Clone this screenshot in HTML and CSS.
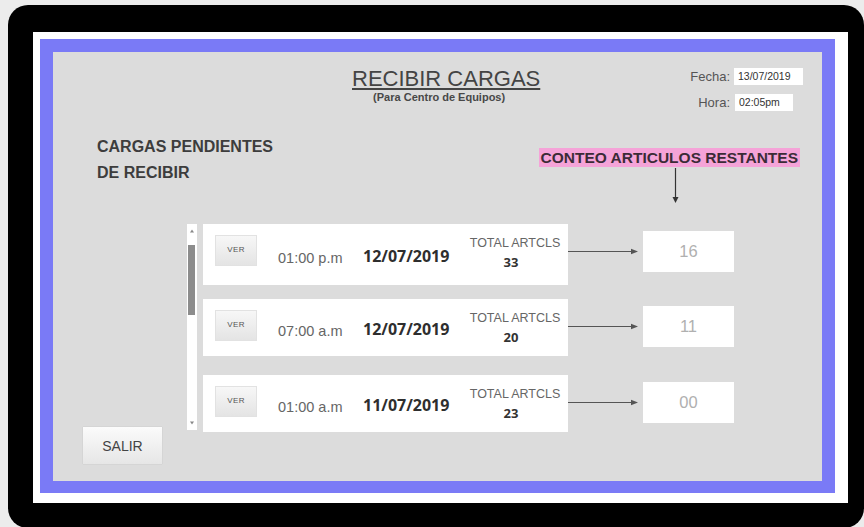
FILE: index.html
```html
<!DOCTYPE html>
<html lang="es">
<head>
<meta charset="utf-8">
<title>Recibir cargas</title>
<link rel="stylesheet" href="styles.css">
</head>
<body>
<div class="device">
  <div class="screen">
    <main class="panel">
      <header class="header">
        <div class="title-block">
          <h1 class="title">RECIBIR CARGAS</h1>
          <p class="subtitle">(Para Centro de Equipos)</p>
        </div>
        <div class="stamp">
          <span class="stamp-label">Fecha:</span><span class="stamp-value stamp-date">13/07/2019</span>
          <span class="stamp-label">Hora:</span><span class="stamp-value stamp-time">02:05pm</span>
        </div>
      </header>

      <section class="mid">
        <h2 class="pending">CARGAS PENDIENTES<br>DE RECIBIR</h2>
        <div class="conteo">
          <span class="conteo-label">CONTEO ARTICULOS RESTANTES</span>
          <svg class="down-arrow" width="9" height="36" viewBox="0 0 9 36">
            <line x1="4.5" y1="0" x2="4.5" y2="31" stroke="#333" stroke-width="1.2"/>
            <path d="M1.5 29 L4.5 35 L7.5 29 Z" fill="#333"/>
          </svg>
        </div>
      </section>

      <section class="list-area">
        <div class="side">
          <button class="salir">SALIR</button>
        </div>

        <div class="scrollbar">
          <svg class="scroll-btn" width="10" height="5" viewBox="0 0 10 5"><path d="M3 4.5 L5 1.5 L7 4.5 Z" fill="#888"/></svg>
          <div class="scroll-thumb"></div>
          <svg class="scroll-btn scroll-btn-down" width="10" height="5" viewBox="0 0 10 5"><path d="M3 0.5 L5 3.5 L7 0.5 Z" fill="#888"/></svg>
        </div>

        <div class="rows">
          <div class="row">
            <div class="card card-first">
              <button class="ver">VER</button>
              <span class="time">01:00 p.m</span>
              <span class="date">12/07/2019</span>
              <div class="totals">
                <div class="totals-label">TOTAL ARTCLS</div>
                <div class="totals-num">33</div>
              </div>
            </div>
            <div class="link">
              <svg class="right-arrow" width="70" height="9" viewBox="0 0 70 9">
                <line x1="0" y1="4.5" x2="64" y2="4.5" stroke="#555" stroke-width="1.2"/>
                <path d="M63 1.8 L70 4.5 L63 7.2 Z" fill="#555"/>
              </svg>
              <div class="count">16</div>
            </div>
          </div>

          <div class="row">
            <div class="card">
              <button class="ver">VER</button>
              <span class="time">07:00 a.m</span>
              <span class="date">12/07/2019</span>
              <div class="totals">
                <div class="totals-label">TOTAL ARTCLS</div>
                <div class="totals-num">20</div>
              </div>
            </div>
            <div class="link">
              <svg class="right-arrow" width="70" height="9" viewBox="0 0 70 9">
                <line x1="0" y1="4.5" x2="64" y2="4.5" stroke="#555" stroke-width="1.2"/>
                <path d="M63 1.8 L70 4.5 L63 7.2 Z" fill="#555"/>
              </svg>
              <div class="count">11</div>
            </div>
          </div>

          <div class="row row-last">
            <div class="card">
              <button class="ver">VER</button>
              <span class="time">01:00 a.m</span>
              <span class="date">11/07/2019</span>
              <div class="totals">
                <div class="totals-label">TOTAL ARTCLS</div>
                <div class="totals-num">23</div>
              </div>
            </div>
            <div class="link">
              <svg class="right-arrow" width="70" height="9" viewBox="0 0 70 9">
                <line x1="0" y1="4.5" x2="64" y2="4.5" stroke="#555" stroke-width="1.2"/>
                <path d="M63 1.8 L70 4.5 L63 7.2 Z" fill="#555"/>
              </svg>
              <div class="count">00</div>
            </div>
          </div>
        </div>
      </section>
    </main>
  </div>
</div>
</body>
</html>
```

FILE: styles.css
```css
html, body {
  margin: 0;
  padding: 0;
}

body {
  width: 864px;
  height: 527px;
  overflow: hidden;
  background: #ececec;
  font-family: "Liberation Sans", Arial, sans-serif;
}

/* tablet bezel */
.device {
  box-sizing: border-box;
  width: 856px;
  height: 523px;
  margin: 5px 0 0 8px;
  padding: 27px 16px 20px 25px;
  background: #000;
  border-radius: 20px;
}

.screen {
  box-sizing: border-box;
  width: 815px;
  height: 471px;
  padding: 7px 13px 10px 7px;
  background: #fff;
}

.panel {
  box-sizing: border-box;
  width: 795px;
  height: 454px;
  border: 13px solid #7a7af6;
  border-bottom-width: 12px;
  background: #dcdcdc;
  display: flex;
  flex-direction: column;
}

/* header: title + date/time stamp */
.header {
  display: flex;
  align-items: flex-start;
  height: 82px;
}

.title-block {
  margin-left: 299px;
  padding-top: 14px;
  text-align: center;
}

.title {
  margin: 0;
  font-size: 22px;
  font-weight: normal;
  line-height: 25px;
  color: #444;
  text-decoration: underline;
  text-decoration-thickness: 1.5px;
  text-underline-offset: 2px;
}

.subtitle {
  margin: 0;
  padding-right: 14px;
  font-size: 11px;
  font-weight: bold;
  line-height: 12px;
  color: #484848;
  white-space: nowrap;
}

.stamp {
  margin-left: auto;
  margin-right: 19px;
  padding-top: 16px;
  display: grid;
  grid-template-columns: auto auto;
  column-gap: 4px;
  row-gap: 9px;
  align-items: center;
}

.stamp-label {
  justify-self: end;
  font-size: 13px;
  color: #555;
}

.stamp-value {
  box-sizing: border-box;
  height: 17px;
  padding-left: 4px;
  background: #fff;
  font-family: "Liberation Sans Narrow", "Liberation Sans", Arial, sans-serif;
  font-size: 10.5px;
  line-height: 17px;
  color: #333;
  white-space: nowrap;
}

.stamp-date { width: 69px; }
.stamp-time { width: 58px; margin-left: 1px; }

/* headings row */
.mid {
  display: flex;
  align-items: flex-start;
  height: 90px;
}

.pending {
  margin: 0 0 0 44px;
  font-size: 16px;
  font-weight: bold;
  line-height: 26px;
  color: #3d3d3d;
}

.conteo {
  margin: 14px 22px 0 auto;
  display: flex;
  flex-direction: column;
  align-items: center;
}

.conteo-label {
  padding: 0 2px;
  background: #f5a3d8;
  font-size: 15.5px;
  font-weight: bold;
  line-height: 19px;
  color: #3b2b36;
  white-space: nowrap;
}

.down-arrow {
  display: block;
  margin: 1px 0 0 13px;
}

/* list of pending loads */
.list-area {
  display: flex;
  align-items: flex-start;
}

.side {
  box-sizing: border-box;
  width: 134px;
  height: 240px;
  padding-left: 30px;
  display: flex;
  flex-direction: column;
  justify-content: flex-end;
}

.salir {
  width: 79px;
  height: 37px;
  padding: 0;
  border: none;
  background: linear-gradient(#fbfbfb, #e6e6e6);
  box-shadow: 0 0 1px rgba(0, 0, 0, 0.18);
  font-family: "Liberation Sans", Arial, sans-serif;
  font-size: 14px;
  color: #444;
}

.scrollbar {
  box-sizing: border-box;
  width: 10px;
  height: 206px;
  padding: 4px 0 4px;
  background: #fff;
  display: flex;
  flex-direction: column;
  align-items: center;
}

.scroll-btn {
  display: block;
}

.scroll-thumb {
  width: 7px;
  height: 70px;
  margin-top: 12px;
  margin-right: 1px;
  background: #8c8c8c;
}

.scroll-btn-down {
  margin-top: auto;
}

.rows {
  margin-left: 6px;
  display: flex;
  flex-direction: column;
  gap: 14px;
}

.row {
  display: flex;
  align-items: flex-start;
}

.row-last {
  margin-top: 5px;
}

.card {
  box-sizing: border-box;
  width: 365px;
  height: 57px;
  padding-left: 12px;
  background: #fff;
  display: flex;
  align-items: center;
}

.card-first {
  height: 61px;
}

.ver {
  align-self: flex-start;
  width: 42px;
  height: 31px;
  margin-top: 11px;
  padding: 0 0 2px;
  border: 1px solid #e2e2e2;
  background: linear-gradient(#f7f7f7, #e4e4e4);
  font-family: "Liberation Sans", Arial, sans-serif;
  font-size: 8px;
  letter-spacing: 0.4px;
  color: #555;
}

.time {
  width: 85px;
  margin: 6px 0 0 21px;
  font-size: 14.5px;
  color: #666;
  white-space: nowrap;
}

.date {
  width: 106px;
  margin-top: 2px;
  font-family: "Open Sans", "Liberation Sans", sans-serif;
  font-size: 16px;
  font-weight: bold;
  color: #2e2e2e;
  white-space: nowrap;
}

.totals {
  align-self: flex-start;
  width: 92px;
  margin-top: 12px;
  text-align: center;
}

.totals-label {
  font-size: 12.5px;
  line-height: 14px;
  color: #666;
  white-space: nowrap;
}

.totals-num {
  margin-top: 4px;
  padding-right: 8px;
  font-family: "Open Sans", "Liberation Sans", sans-serif;
  font-size: 13px;
  font-weight: bold;
  line-height: 17px;
  color: #333;
}

.link {
  height: 41px;
  margin-top: 7px;
  display: flex;
  align-items: center;
}

.right-arrow {
  display: block;
}

.count {
  width: 91px;
  height: 41px;
  margin-left: 5px;
  background: #fff;
  display: flex;
  align-items: center;
  justify-content: center;
  font-size: 16.5px;
  color: #b0b0b0;
}
```
